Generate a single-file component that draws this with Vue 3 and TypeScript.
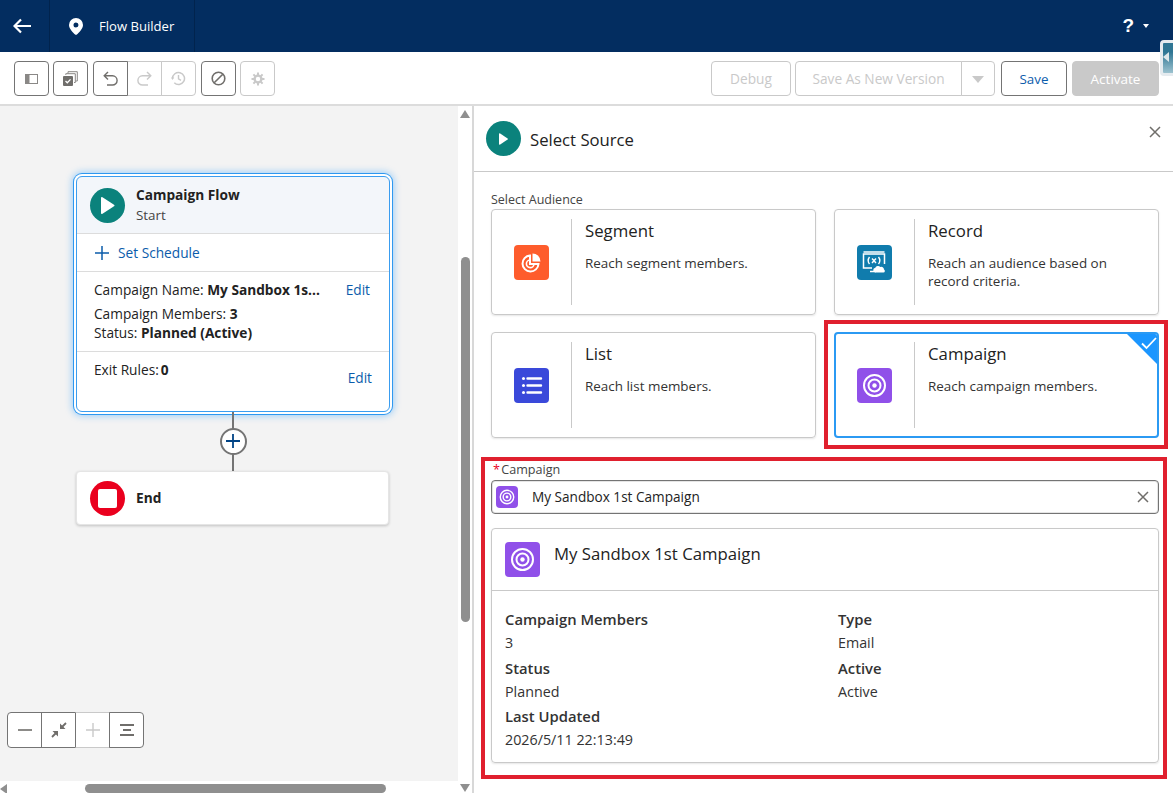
<template>
  <div class="page">
    <header class="topbar">
      <button class="back" aria-label="Back">
        <svg width="20" height="16" viewBox="0 0 20 16"><path d="M8 1.500 1.500 8 8 14.500M2 8h16" fill="none" stroke="#fff" stroke-width="2.200" /></svg>
      </button>
      <div class="app-tab">
        <svg width="14" height="17" viewBox="0 0 14 17"><path fill-rule="evenodd" d="M7 0a7 7 0 0 1 7 7c0 3.800-4.600 8.300-6.200 9.600a1.200 1.200 0 0 1-1.600 0C4.600 15.300 0 10.800 0 7a7 7 0 0 1 7-7Zm0 4.500a2.500 2.500 0 1 0 0 5 2.500 2.500 0 0 0 0-5Z" fill="#fff" /></svg>
        <span>Flow Builder</span>
      </div>
      <div class="help">
        <span class="help-mark">?</span>
        <span class="help-caret"></span>
      </div>
    </header>

    <div class="toolbar">
      <div class="tools">
        <button class="tool">
          <svg width="13" height="10" viewBox="0 0 13 10"><rect x=".5" y=".5" width="12" height="9" fill="#fff" stroke="#8a8886" /><rect x="1" y="1" width="3.500" height="8" fill="#8a8886" /></svg>
        </button>
        <button class="tool tight">
          <svg width="15" height="15" viewBox="0 0 15 15"><path d="M5 2.500V.7h9.300V10h-1.800" fill="none" stroke="#8a8886" /><path d="M2.800 3.900V2.700h9.500v8.800h-1.300" fill="none" stroke="#8a8886" /><rect y="5" width="10" height="10" rx="1" fill="#706e6b" /><path d="m2.500 10 1.800 1.800 3.200-3.400" fill="none" stroke="#fff" stroke-width="1.300" /></svg>
        </button>
        <div class="tool-group">
          <button class="tool">
            <svg width="15" height="16" viewBox="0 0 15 16"><path d="M5 1 1.200 4.800 5 8.600M1.500 4.800h8a4.500 4.500 0 0 1 0 9.200H4" fill="none" stroke="#706e6b" stroke-width="1.400" /></svg>
          </button>
          <button class="tool off">
            <svg width="15" height="16" viewBox="0 0 15 16"><path d="M10 1l3.800 3.800L10 8.600M13.500 4.800h-8a4.500 4.500 0 0 0 0 9.200H11" fill="none" stroke="#c9c9c9" stroke-width="1.400" /></svg>
          </button>
          <button class="tool off">
            <svg width="15" height="15" viewBox="0 0 15 15"><path d="M1.500 7.500a6 6 0 1 1 1.800 4.300" fill="none" stroke="#c9c9c9" stroke-width="1.500" /><path d="M0 6.500h3.200L1.500 9Z" fill="#c9c9c9" /><path d="M7.500 4v3.800l2.500 1.500" fill="none" stroke="#c9c9c9" stroke-width="1.400" /></svg>
          </button>
        </div>
        <button class="tool">
          <svg width="15" height="15" viewBox="0 0 15 15"><circle cx="7.500" cy="7.500" r="6.300" fill="none" stroke="#706e6b" stroke-width="1.600" /><path d="M3.200 11.800l8.600-8.600" stroke="#706e6b" stroke-width="1.600" /></svg>
        </button>
        <button class="tool off tight">
          <svg width="14" height="14" viewBox="0 0 14 14"><circle cx="7" cy="7" r="3.400" fill="none" stroke="#c9c9c9" stroke-width="2.400" /><path d="M7 .5v2.500M7 11v2.500M.5 7H3M11 7h2.500M2.400 2.400l1.800 1.800M9.800 9.800l1.800 1.800M2.400 11.600l1.800-1.800M9.800 4.200l1.800-1.800" stroke="#c9c9c9" stroke-width="2" /></svg>
        </button>
      </div>
      <div class="actions">
        <button class="btn debug">Debug</button>
        <div class="split">
          <button class="btn split-main">Save As New Version</button>
          <button class="btn split-more"><i></i></button>
        </div>
        <button class="btn save">Save</button>
        <button class="btn activate">Activate</button>
      </div>
    </div>

    <div class="main">
      <section class="canvas-wrap">
        <div class="canvas-row">
          <div class="canvas">
            <div class="start-node">
              <div class="node-head">
                <span class="round teal big">
                  <svg width="15" height="19" viewBox="0 0 15 19"><path d="M1 2v15a1 1 0 0 0 1.500.8l11.500-7.500a1 1 0 0 0 0-1.600L2.500 1.200A1 1 0 0 0 1 2Z" fill="#fff" /></svg>
                </span>
                <div class="node-name">
                  <div class="node-title">Campaign Flow</div>
                  <div class="node-sub">Start</div>
                </div>
              </div>
              <div class="schedule">
                <svg width="14" height="14" viewBox="0 0 14 14"><path d="M7 0v14M0 7h14" stroke="#0b5cab" stroke-width="1.500" /></svg>
                <a>Set Schedule</a>
              </div>
              <div class="node-info">
                <div class="info-line first">
                  <span>Campaign Name: <b>My Sandbox 1s...</b></span>
                  <a>Edit</a>
                </div>
                <div class="info-line">Campaign Members: <b>3</b></div>
                <div class="info-line">Status: <b>Planned (Active)</b></div>
              </div>
              <div class="node-exit">
                <span>Exit Rules:<b>0</b></span>
                <a>Edit</a>
              </div>
            </div>
            <div class="wire">
              <span class="add">
                <svg width="16" height="16" viewBox="0 0 16 16"><path d="M8 1v14M1 8h14" stroke="#014486" stroke-width="1.800" /></svg>
              </span>
            </div>
            <div class="end-node">
              <span class="round red big">
                <i></i>
              </span>
              <b>End</b>
            </div>

            <div class="zoom-tools">
              <button class="zoom">
                <svg width="16" height="16" viewBox="0 0 16 16"><path d="M1 8h14" stroke="#706e6b" stroke-width="1.600" /></svg>
              </button>
              <button class="zoom">
                <svg width="16" height="16" viewBox="0 0 16 16"><path d="M15 1 10.500 5.500M1 15l4.500-4.500" stroke="#706e6b" stroke-width="1.800" /><path d="M9 1.500V7h5.500ZM7 14.500V9H1.500Z" fill="#706e6b" /></svg>
              </button>
              <button class="zoom off">
                <svg width="16" height="16" viewBox="0 0 16 16"><path d="M8 1v14M1 8h14" stroke="#c9c9c9" stroke-width="1.400" /></svg>
              </button>
              <button class="zoom">
                <svg width="14" height="14" viewBox="0 0 14 14"><path d="M0 2h14M3 7h8M0 12h14" stroke="#706e6b" stroke-width="1.800" /></svg>
              </button>
            </div>
          </div>
          <div class="vscroll">
            <i class="arrow up"></i>
            <span class="vthumb"></span>
            <i class="arrow down"></i>
          </div>
        </div>
        <div class="hscroll">
          <i class="arrow left"></i>
          <span class="hthumb"></span>
        </div>
      </section>

      <section class="panel">
        <div class="panel-head">
          <span class="round teal">
            <svg width="9" height="12" viewBox="0 0 9 12"><path d="M0 1v10a.8.800 0 0 0 1.200.6l7.400-5a.8.800 0 0 0 0-1.200L1.200.4A.8.800 0 0 0 0 1Z" fill="#fff" /></svg>
          </span>
          <h2>Select Source</h2>
          <svg class="close" width="12" height="12" viewBox="0 0 12 12"><path d="M1 1l10 10M11 1 1 11" stroke="#706e6b" stroke-width="1.500" /></svg>
        </div>

        <div class="panel-body">
          <div class="group-label">Select Audience</div>
          <div class="choices">
            <div v-for="card in cards" :key="card.name" class="choice" :class="{ picked: card.picked }">
              <div class="choice-icon">
                <span class="tile" :style="{ background: card.color }">
                  <svg v-if="card.name === 'Segment'" width="23" height="23" viewBox="0 0 23 23">
                    <path d="M10 4.500a8 8 0 1 0 8.500 8.500H10Z" fill="none" stroke="#fff" stroke-width="2" />
                    <path d="M10 9a3.800 3.800 0 1 0 4 4" fill="none" stroke="#fff" stroke-width="1.600" />
                    <path d="M12.500 2.500a8 8 0 0 1 8 8h-8Z" fill="#fff" />
                  </svg>
                  <svg v-else-if="card.name === 'Record'" width="24" height="23" viewBox="0 0 24 23">
                    <path d="M10 17H1.500V3h21v10" fill="none" stroke="#fff" stroke-width="1.500" />
                    <path d="M1.500 1h21" stroke="#fff" stroke-width="1.500" />
                    <path d="M7.500 6c-1.600 2.200-1.600 5 0 7M16.500 6c1.600 2.200 1.600 5 0 7M10 7.500l4 4.500M14 7.500 10 12" fill="none" stroke="#fff" stroke-width="1.400" />
                    <path d="M13 21.500a2.400 2.400 0 0 1 .3-4.700 3 3 0 0 1 5-.8 2.700 2.700 0 0 1 3.700 2.500 1.600 1.600 0 0 1-.5 3Z" fill="#fff" />
                    <path d="M8 20.500h6" stroke="#fff" stroke-width="1.500" />
                  </svg>
                  <svg v-else-if="card.name === 'List'" width="23" height="23" viewBox="0 0 23 23">
                    <circle cx="3.500" cy="4.500" r="1.500" fill="#fff" />
                    <circle cx="3.500" cy="11.500" r="1.500" fill="#fff" />
                    <circle cx="3.500" cy="18.500" r="1.500" fill="#fff" />
                    <path d="M7.500 4.500H21M7.500 11.500H21M7.500 18.500H21" stroke="#fff" stroke-width="2.400" stroke-linecap="round" />
                  </svg>
                  <svg v-else width="25" height="25" viewBox="0 0 25 25">
                    <circle cx="12.500" cy="12.500" r="10.500" fill="none" stroke="#fff" stroke-width="2" />
                    <circle cx="12.500" cy="12.500" r="6" fill="none" stroke="#fff" stroke-width="2" />
                    <circle cx="12.500" cy="12.500" r="2.200" fill="#fff" />
                  </svg>
                </span>
              </div>
              <div class="choice-text">
                <h3>{{ card.name }}</h3>
                <p>{{ card.text }}</p>
              </div>
              <span v-if="card.picked" class="check">
                <svg width="18" height="14" viewBox="0 0 18 14"><path d="M2 7.500 6.500 12 16 2" fill="none" stroke="#fff" stroke-width="1.800" /></svg>
              </span>
            </div>
          </div>

          <div class="field-label"><em>*</em> Campaign</div>
          <div class="picker">
            <span class="tile small">
              <svg width="16" height="16" viewBox="0 0 25 25">
                <circle cx="12.500" cy="12.500" r="10.500" fill="none" stroke="#fff" stroke-width="2.200" />
                <circle cx="12.500" cy="12.500" r="6" fill="none" stroke="#fff" stroke-width="2.200" />
                <circle cx="12.500" cy="12.500" r="2.200" fill="#fff" />
              </svg>
            </span>
            <span class="picker-value">My Sandbox 1st Campaign</span>
            <svg class="clear" width="12" height="12" viewBox="0 0 12 12"><path d="M1 1l10 10M11 1 1 11" stroke="#706e6b" stroke-width="1.500" /></svg>
          </div>

          <div class="preview">
            <div class="preview-head">
              <span class="tile">
                <svg width="25" height="25" viewBox="0 0 25 25">
                  <circle cx="12.500" cy="12.500" r="10.500" fill="none" stroke="#fff" stroke-width="2" />
                  <circle cx="12.500" cy="12.500" r="6" fill="none" stroke="#fff" stroke-width="2" />
                  <circle cx="12.500" cy="12.500" r="2.200" fill="#fff" />
                </svg>
              </span>
              <h3>My Sandbox 1st Campaign</h3>
            </div>
            <dl class="facts">
              <div v-for="fact in facts" :key="fact.label" class="fact">
                <dt>{{ fact.label }}</dt>
                <dd>{{ fact.value }}</dd>
              </div>
            </dl>
          </div>
        </div>
      </section>
    </div>

    <!-- annotation boxes drawn over the screenshot -->
    <div class="mark mark-card"></div>
    <div class="mark mark-form"></div>
    <div class="dock"><i></i></div>
  </div>
</template>

<script setup lang="ts">
interface Card {
  name: string
  text: string
  color: string
  picked?: boolean
}

const cards: Card[] = [
  { name: 'Segment', text: 'Reach segment members.', color: '#fe5c2c' },
  { name: 'Record', text: 'Reach an audience based on record criteria.', color: '#107cad' },
  { name: 'List', text: 'Reach list members.', color: '#3a49da' },
  { name: 'Campaign', text: 'Reach campaign members.', color: '#9050e9', picked: true },
]

const facts = [
  { label: 'Campaign Members', value: '3' },
  { label: 'Type', value: 'Email' },
  { label: 'Status', value: 'Planned' },
  { label: 'Active', value: 'Active' },
  { label: 'Last Updated', value: '2026/5/11 22:13:49' },
]
</script>

<style>
html,
body {
  margin: 0;
  overflow: hidden;
}
</style>

<style scoped>
* {
  box-sizing: border-box;
}

.page {
  position: relative;
  width: 1173px;
  height: 793px;
  overflow: hidden;
  display: flex;
  flex-direction: column;
  background: #fff;
  color: #222;
  font-family: "Open Sans", "Noto Sans", sans-serif;
  font-size: 13.600px;
}

button {
  font-family: inherit;
  padding: 0;
  background: #fff;
  cursor: pointer;
}

a {
  color: #0b5cab;
}

h2,
h3,
p,
dl,
dd {
  margin: 0;
  font-weight: 400;
}

/* top bar */
.topbar {
  flex: none;
  height: 52px;
  display: flex;
  align-items: center;
  background: #032d60;
  color: #fff;
}

.back {
  width: 50px;
  height: 100%;
  border: 0;
  border-right: 1px solid #01234d;
  background: transparent;
  display: flex;
  align-items: center;
  justify-content: center;
  padding-right: 4px;
}

.app-tab {
  width: 145px;
  height: 100%;
  display: flex;
  align-items: center;
  gap: 16px;
  padding-left: 19px;
  border-right: 1px solid #01234d;
  font-size: 13.100px;
}

.help {
  margin-left: auto;
  margin-right: 24px;
  display: flex;
  align-items: center;
  gap: 9px;
}

.help-mark {
  font-size: 19px;
  font-weight: 700;
  font-family: "Liberation Sans", sans-serif;
}

.help-caret {
  border: 3.500px solid transparent;
  border-top: 4px solid #fff;
  border-bottom: 0;
}

/* toolbar */
.toolbar {
  flex: none;
  height: 54px;
  display: flex;
  align-items: center;
  justify-content: space-between;
  padding: 1px 14px 0;
  border-bottom: 2px solid #dcdcdc;
}

.tools {
  display: flex;
  gap: 5px;
}

.tool {
  width: 35px;
  height: 35px;
  border: 1px solid #747474;
  border-radius: 4px;
  display: flex;
  align-items: center;
  justify-content: center;
}

.tool.tight {
  margin-left: -1px;
}

.tool.off {
  border-color: #c9c9c9;
}

.tool-group {
  display: flex;
}

.tool-group .tool {
  border-radius: 0;
  margin-left: -1px;
}

.tool-group .tool:first-child {
  border-radius: 4px 0 0 4px;
  margin-left: 0;
  position: relative;
  z-index: 1;
}

.tool-group .tool:last-child {
  border-radius: 0 4px 4px 0;
}

.actions {
  display: flex;
  gap: 5px;
}

.btn {
  height: 35px;
  border: 1px solid #c9c9c9;
  border-radius: 4px;
  color: #c9c9c9;
  font-size: 13.700px;
}

.debug {
  width: 80px;
  margin-right: -1px;
}

.split {
  display: flex;
  margin-right: 1px;
}

.split-main {
  width: 167px;
  border-radius: 4px 0 0 4px;
}

.split-more {
  width: 34px;
  margin-left: -1px;
  border-radius: 0 4px 4px 0;
  display: flex;
  align-items: center;
  justify-content: center;
}

.split-more i {
  border: 6px solid transparent;
  border-top: 7px solid #c9c9c9;
  border-bottom: 0;
  margin-top: 2px;
}

.save {
  width: 66px;
  border-color: #747474;
  color: #0b5cab;
  font-size: 13.400px;
}

.activate {
  width: 87px;
  background: #c9c9c9;
  color: #fff;
  font-size: 13.500px;
}

/* canvas */
.main {
  flex: 1;
  min-height: 0;
  display: flex;
}

.canvas-wrap {
  flex: none;
  width: 474px;
  display: flex;
  flex-direction: column;
  border-right: 2px solid #d8d8d8;
}

.canvas-row {
  flex: 1;
  min-height: 0;
  display: flex;
}

.canvas {
  position: relative;
  width: 458px;
  background: #f3f3f3;
  padding: 71px 0 0 77px;
  font-size: 13.700px;
}

.start-node {
  width: 312px;
  height: 234px;
  background: #fff;
  border-radius: 5px;
  outline: 1px solid #3a9df0;
  box-shadow: 0 0 0 3px #fff, 0 0 0 4px #2e98f0, 0 0 7px 5px rgba(27, 150, 255, .4);
  display: flex;
  flex-direction: column;
}

.node-head {
  height: 57px;
  flex: none;
  display: flex;
  align-items: center;
  gap: 11px;
  padding-left: 13px;
  background: #f3f6fa;
  border-radius: 5px 5px 0 0;
  border-bottom: 1px solid #dcdcdc;
}

.round {
  width: 35px;
  height: 35px;
  flex: none;
  border-radius: 50%;
  display: flex;
  align-items: center;
  justify-content: center;
}

.teal {
  background: #0b827c;
}

.red {
  background: #ea001e;
}

.red i {
  width: 19px;
  height: 19px;
  background: #fff;
  border-radius: 2px;
}

.node-name {
  margin-top: 2px;
}

.node-title {
  font-weight: 700;
  line-height: 18px;
}

.node-sub {
  color: #444;
  line-height: 22px;
  font-size: 13.400px;
}

.schedule {
  height: 38px;
  flex: none;
  display: flex;
  align-items: center;
  gap: 9px;
  padding-left: 18px;
  border-bottom: 1px solid #dcdcdc;
}

.node-info {
  height: 80px;
  flex: none;
  padding: 8px 19px 0 17px;
  border-bottom: 1px solid #dcdcdc;
  line-height: 19px;
}

.info-line.first {
  display: flex;
  justify-content: space-between;
  margin-bottom: 5px;
}

.node-exit {
  flex: 1;
  padding: 8px 17px;
  display: flex;
  justify-content: space-between;
  align-items: flex-start;
  line-height: 19px;
}

.node-exit b {
  margin-left: 2px;
}

.node-exit a {
  margin-top: 8px;
}

.wire {
  width: 312px;
  height: 60px;
  display: flex;
  align-items: center;
  justify-content: center;
  background: linear-gradient(#747474, #747474) no-repeat center / 2px 100%;
}

.add {
  width: 27px;
  height: 27px;
  border-radius: 50%;
  border: 2px solid #747474;
  background: #fff;
  display: flex;
  align-items: center;
  justify-content: center;
}

.end-node {
  width: 313px;
  margin-left: -1px;
  height: 54px;
  background: #fff;
  border-radius: 4px;
  border: 1px solid #e5e5e5;
  box-shadow: 0 1px 3px rgba(0, 0, 0, .2);
  display: flex;
  align-items: center;
  gap: 11px;
  padding-left: 13px;
}

.end-node b {
  margin-bottom: 1px;
}

.zoom-tools {
  position: absolute;
  left: 7px;
  top: 606px;
  display: flex;
}

.zoom {
  width: 35px;
  height: 36px;
  margin-left: -1px;
  border: 1px solid #747474;
  display: flex;
  align-items: center;
  justify-content: center;
}

.zoom:first-child {
  margin-left: 0;
  border-radius: 4px 0 0 4px;
}

.zoom:last-child {
  border-radius: 0 4px 4px 0;
}

.zoom.off {
  border-top-color: #c9c9c9;
  border-bottom-color: #c9c9c9;
}

/* scrollbars */
.vscroll {
  width: 14px;
  position: relative;
  z-index: 1;
  background: #fff;
}

.vthumb {
  position: absolute;
  left: 3px;
  top: 151px;
  width: 9px;
  height: 365px;
  border-radius: 5px;
  background: #8f8f8f;
}

.hscroll {
  flex: none;
  height: 12px;
  position: relative;
  background: #fff;
}

.hthumb {
  position: absolute;
  left: 85px;
  top: 3px;
  width: 301px;
  height: 9px;
  border-radius: 5px;
  background: #8f8f8f;
}

.arrow {
  position: absolute;
  width: 0;
  height: 0;
  border: 5px solid transparent;
}

.arrow.up {
  top: 4px;
  left: 2px;
  border-top: 0;
  border-bottom: 8px solid #8f8f8f;
}

.arrow.down {
  bottom: -11px;
  left: 2px;
  border-bottom: 0;
  border-top: 8px solid #8f8f8f;
}

.arrow.left {
  left: 0;
  top: 3px;
  border-left: 0;
  border-right: 7px solid #8f8f8f;
}

/* side panel */
.panel {
  flex: 1;
  min-width: 0;
}

.panel-head {
  height: 66px;
  display: flex;
  align-items: center;
  gap: 9px;
  padding: 0 12px 0 12px;
  border-bottom: 1px solid #c9c9c9;
}

.panel-head h2 {
  font-size: 16.700px;
  margin-top: 2px;
}

.close {
  margin-left: auto;
  margin-bottom: 13px;
}

.panel-body {
  padding: 19px 14px 0 17px;
}

.group-label {
  font-size: 12.500px;
  line-height: 18px;
  color: #444;
}

.choices {
  display: grid;
  grid-template-columns: 325px 325px;
  grid-template-rows: 106px 106px;
  gap: 17px 18px;
}

.choice {
  position: relative;
  display: flex;
  overflow: hidden;
  border: 1px solid #c9c9c9;
  border-radius: 4px;
  box-shadow: 0 1px 2px rgba(0, 0, 0, .1);
  padding: 9px 0;
}

.choice.picked {
  border: 2px solid #2b9af3;
  padding: 8px 0;
  box-shadow: none;
}

.choice-icon {
  flex: none;
  width: 80px;
  border-right: 1px solid #c9c9c9;
  display: flex;
  align-items: center;
  justify-content: center;
  padding-right: 1px;
}

.picked .choice-icon {
  width: 79px;
}

.tile {
  width: 35px;
  height: 35px;
  flex: none;
  border-radius: 4px;
  background: #9050e9;
  display: flex;
  align-items: center;
  justify-content: center;
}

.tile.small {
  width: 22px;
  height: 22px;
}

.choice-text {
  padding: 0 40px 0 13px;
}

.choice-text h3 {
  font-size: 16.800px;
  line-height: 24px;
}

.choice-text p {
  margin-top: 11px;
  font-size: 13.450px;
  line-height: 18px;
  color: #333;
}

.check {
  position: absolute;
  top: -1px;
  right: -1px;
  width: 32px;
  height: 32px;
  background: #1b96ff;
  clip-path: polygon(0 0, 100% 0, 100% 100%);
  display: flex;
  justify-content: flex-end;
}

.check svg {
  margin: 3px 0 0;
}

.field-label {
  margin-top: 23px;
  margin-bottom: 2px;
  font-size: 12.600px;
  line-height: 17px;
  color: #444;
  padding-left: 2px;
}

.field-label em {
  color: #ea001e;
  font-style: normal;
  margin-right: -2px;
}

.picker {
  height: 34px;
  display: flex;
  align-items: center;
  padding: 0 9px 0 4px;
  border: 1px solid #747474;
  border-radius: 4px;
  box-shadow: inset 0 0 0 1px #e5e5e5;
}

.picker-value {
  margin: 0 0 1px 14px;
}

.clear {
  margin-left: auto;
}

.preview {
  margin-top: 14px;
  height: 235px;
  border: 1px solid #c9c9c9;
  border-radius: 4px;
  box-shadow: 0 1px 2px rgba(0, 0, 0, .1);
}

.preview-head {
  height: 62px;
  display: flex;
  gap: 14px;
  padding: 13px 13px 0;
  border-bottom: 1px solid #c9c9c9;
}

.preview-head h3 {
  font-size: 16.750px;
  line-height: 24px;
}

.facts {
  padding: 16px 13px 0;
  display: grid;
  grid-template-columns: 333px 1fr;
  grid-auto-rows: 48.500px;
}

.fact dt {
  font-weight: 600;
  line-height: 24px;
  font-size: 14.800px;
  color: #333;
}

.fact dd {
  line-height: 24px;
  font-size: 14.300px;
  color: #333;
}

/* overlays */
.mark {
  position: absolute;
  border: 4px solid #e0202e;
  pointer-events: none;
}

.mark-card {
  left: 824px;
  top: 320px;
  width: 344px;
  height: 129px;
}

.mark-form {
  left: 481px;
  top: 457px;
  width: 686px;
  height: 322px;
}

.dock {
  position: absolute;
  left: 1160px;
  top: 40px;
  width: 20px;
  height: 36px;
  border-radius: 4px 0 0 4px;
  background: linear-gradient(#2f7694 30%, #9cc2cf);
  border: 3px solid #e5ebef;
}

.dock i {
  position: absolute;
  left: 0;
  top: 9px;
  border: 5px solid transparent;
  border-left: 0;
  border-right: 6px solid #dfe7ea;
}
</style>
